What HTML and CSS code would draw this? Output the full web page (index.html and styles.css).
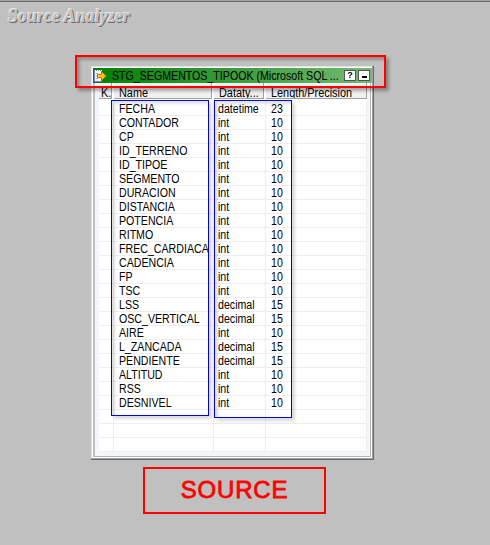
FILE: index.html
```html
<!DOCTYPE html>
<html lang="en">
<head>
<meta charset="utf-8">
<title>Source Analyzer</title>
<link rel="stylesheet" href="styles.css">
</head>
<body>
<h1 class="heading">Source Analyzer</h1>
<div class="window">
  <div class="titlebar">
    <svg class="icon" width="14" height="14" viewBox="0 0 14 14">
      <path d="M1.500 1.500h7v11h-7z" fill="#f4f7ff" stroke="#6f80e4"/>
      <path d="M2 1.500h7" stroke="#fff" stroke-dasharray="1 1"/>
      <path d="M3 4.500h2M3 7h1M3 9.500h2" stroke="#9aa5df"/>
      <path d="M4.500 5.300h4V2.600L13.300 7l-4.800 4.400V8.700h-4z" fill="#ffc51c" stroke="#b37800"/>
    </svg>
    <span class="caption"><span class="t">STG_SEGMENTOS_TIPOOK (Microsoft SQL ...</span></span>
    <span class="btn">?</span>
    <span class="btn"><i class="dash"></i></span>
  </div>
  <div class="client">
    <div class="head"><div><span class="t">K.</span></div><div><span class="t">Name</span></div><div><span class="t">Dataty...</span></div><div><span class="t">Length/Precision</span></div></div>
    <div class="rows" id="rows"></div>
  </div>
</div>
<div class="mark red title-mark"></div>
<div class="mark blue name-mark"></div>
<div class="mark blue type-mark"></div>
<div class="source">SOURCE</div>
<script src="script.js"></script>
</body>
</html>
```
FILE: styles.css
```css
* { box-sizing: border-box; }
body {
  margin: 0;
  width: 490px;
  height: 545px;
  overflow: hidden;
  background: #c0c0c0;
  border-top: 1px solid #a0a0a0;
  box-shadow: inset 0 1px #696969;
  font-family: "Liberation Sans", Arial, sans-serif;
  font-size: 12.5px;
  color: #000;
}
.heading {
  margin: 0;
  height: 65px;
  padding: 5px 0 0 8px;
  font: italic bold 18px/20px "Liberation Serif", serif;
  color: #c0c0c0;
  text-shadow: -1px -1px #e8e8e8, 1px 1px #696969;
}
.t {
  display: inline-block;
  transform: scaleX(.85);
  transform-origin: 0 50%;
  white-space: nowrap;
}
.window {
  width: 283px;
  height: 394px;
  margin-left: 91px;
  padding: 2px 1px 1px 2px;
  background: #fff;
  border-right: 1px solid #696969;
  border-bottom: 1px solid #696969;
  box-shadow: inset -1px -1px #a0a0a0, inset 1px 1px #e3e3e3;
}
.titlebar {
  display: flex;
  align-items: center;
  height: 15px;
  width: 279px;
  background: linear-gradient(90deg, #008000, #74ba74);
}
.icon { flex: none; }
.caption { flex: none; width: 238px; padding-left: 5px; line-height: 16px; }
.btn {
  display: flex;
  align-items: center;
  justify-content: center;
  flex: none;
  width: 12px;
  height: 11px;
  margin-right: 2px;
  background: #fff;
  border: 1px solid #555;
  font: bold 9px/9px "Liberation Sans", sans-serif;
}
.caption + .btn { margin-left: -1px; }
.dash { width: 5px; height: 2px; margin-top: 3px; background: #000; }
.client {
  height: 374px;
  width: 278px;
  padding: 0 3px 0 4px;
  background: #f3f6fb;
  border-left: 2px solid #c0c0c0;
  border-right: 1px solid #b4b4b4;
  border-bottom: 1px solid #b4b4b4;
}
.head, .row { display: grid; grid-template-columns: 15px 100px 52px 101px; }
.head { width: 268px; height: 18px; background: #fff; }
.head div {
  height: 16px;
  line-height: 20px;
  background: #f0f0f0;
  border-right: 1px solid #a0a0a0;
  border-bottom: 1px solid #a0a0a0;
  padding-left: 5px;
  overflow: hidden;
}
.head div:first-child { width: 13px; padding-left: 2px; }
.head div:nth-child(2) { width: 98px; }
.head div:nth-child(3) { width: 50px; }
.head .t { transform: scaleX(.87); }
.rows { width: 268px; background: #fff; border-top: 1px solid #fff; }
.row { height: 14px; line-height: 15px; }
.row div {
  height: 14px;
  padding-left: 5px;
  border-right: 1px solid #eee;
  border-bottom: 1px solid #eee;
  white-space: nowrap;
}
.row div:nth-child(3) { padding-left: 4px; }
.mark { position: absolute; }
.red { border: 2px solid #f00; box-shadow: 3px 3px 3px rgba(0,0,0,.3), inset 3px 3px 3px rgba(0,0,0,.25); }
.blue { border: 1px solid #0000e8; box-shadow: 3px 3px 3px rgba(0,0,0,.14), inset 3px 3px 3px rgba(0,0,0,.12); }
.title-mark { left: 75px; top: 55px; width: 311px; height: 33px; }
.name-mark { left: 111px; top: 100px; width: 98px; height: 316px; }
.type-mark { left: 214px; top: 100px; width: 78px; height: 318px; }
.source {
  width: 183px;
  height: 47px;
  margin: 7px 0 0 143px;
  border: 2px solid #f00;
  color: #f00;
  font-size: 24px;
  letter-spacing: .8px;
  line-height: 42px;
  text-align: center;
  -webkit-text-stroke: .8px #f00;
}
```
FILE: script.js
```js
const columns = [
  ["FECHA", "datetime", 23], ["CONTADOR", "int", 10], ["CP", "int", 10],
  ["ID_TERRENO", "int", 10], ["ID_TIPOE", "int", 10], ["SEGMENTO", "int", 10],
  ["DURACION", "int", 10], ["DISTANCIA", "int", 10], ["POTENCIA", "int", 10],
  ["RITMO", "int", 10], ["FREC_CARDIACA", "int", 10], ["CADENCIA", "int", 10],
  ["FP", "int", 10], ["TSC", "int", 10], ["LSS", "decimal", 15],
  ["OSC_VERTICAL", "decimal", 15], ["AIRE", "int", 10], ["L_ZANCADA", "decimal", 15],
  ["PENDIENTE", "decimal", 15], ["ALTITUD", "int", 10], ["RSS", "int", 10],
  ["DESNIVEL", "int", 10], ["", "", ""], ["", "", ""], ["", "", ""]
];
document.getElementById("rows").innerHTML = columns.map(c =>
  `<div class="row"><div></div>${c.map(v => `<div><span class="t">${v}</span></div>`).join("")}</div>`
).join("");
```
